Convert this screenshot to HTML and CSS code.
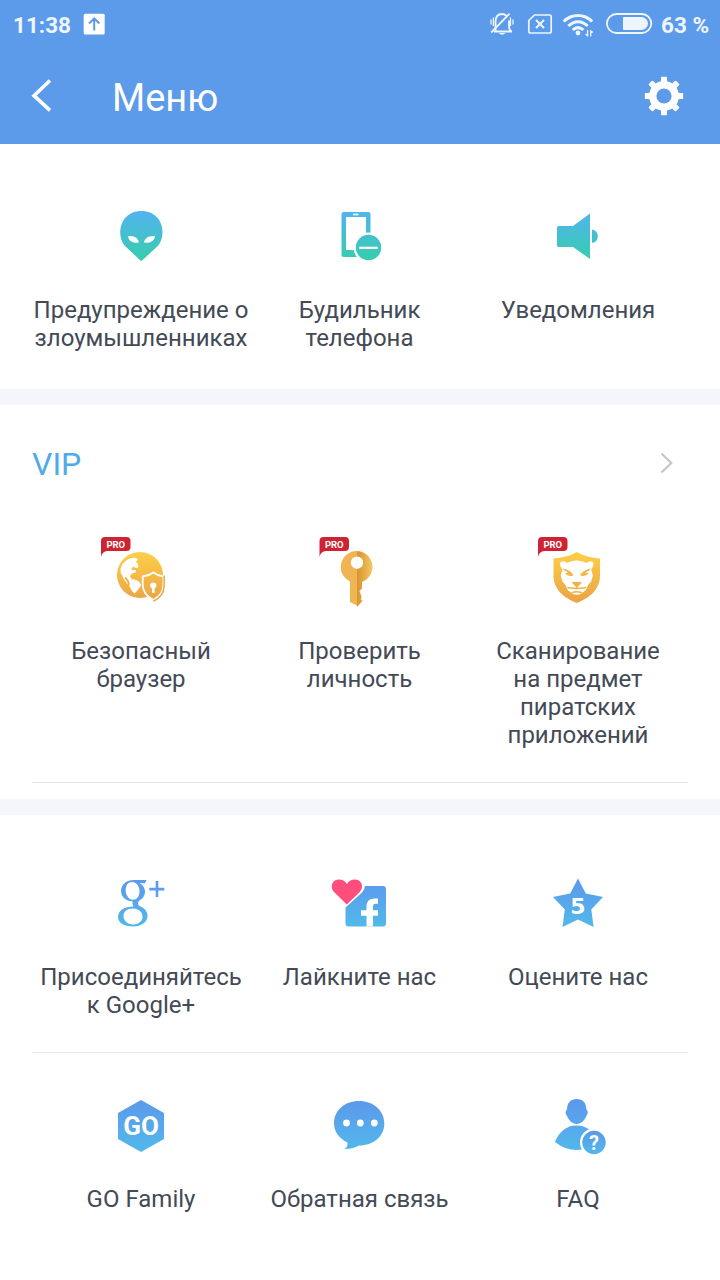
FILE: index.html
```html
<!DOCTYPE html>
<html lang="ru">
<head>
<meta charset="utf-8">
<title>Меню</title>
<link rel="stylesheet" href="styles.css">
</head>
<body>
<svg class="defs" width="0" height="0">
  <defs>
    <linearGradient id="teal" gradientUnits="userSpaceOnUse" x1="0" y1="211" x2="0" y2="261"><stop offset="0" stop-color="#52b3f0"/><stop offset="1" stop-color="#36ceab"/></linearGradient>
    <linearGradient id="gold" gradientUnits="userSpaceOnUse" x1="0" y1="552" x2="0" y2="602"><stop offset="0" stop-color="#fdcf48"/><stop offset="1" stop-color="#e9a344"/></linearGradient>
    <linearGradient id="blue" gradientUnits="userSpaceOnUse" x1="0" y1="879" x2="0" y2="927"><stop offset="0" stop-color="#5c98ec"/><stop offset="1" stop-color="#51b9ea"/></linearGradient>
    <linearGradient id="blue2" gradientUnits="userSpaceOnUse" x1="0" y1="1100" x2="0" y2="1152"><stop offset="0" stop-color="#5c98ec"/><stop offset="1" stop-color="#51b9ea"/></linearGradient>
    <linearGradient id="badge" gradientUnits="userSpaceOnUse" x1="0" y1="1131" x2="0" y2="1154"><stop offset="0" stop-color="#5c98ec"/><stop offset="1" stop-color="#51b9ea"/></linearGradient>
    <linearGradient id="keyr" gradientUnits="userSpaceOnUse" x1="357" y1="0" x2="373" y2="0"><stop offset="0" stop-color="#d99331"/><stop offset="1" stop-color="#f1cb62"/></linearGradient>
    <g id="pro"><path d="M101 557V541q0-4 4-4h21.500q4 0 4 4v6q0 4-4 4h-19q-5.500 .5-6.500 6z" fill="#ce2333"/><text x="115.800" y="547.900" class="pro">PRO</text></g>
  </defs>
</svg>
<header class="top">
  <div class="status">
    <span class="time">11:38</span>
    <svg class="upload" width="22" height="22" viewBox="83 13 22 22"><rect x="83.700" y="13.700" width="21" height="20.800" rx="1.500" fill="#fff"/><path d="M94.200 30.500V19M89 23.500l5.200-5 5.200 5" fill="none" stroke="#5c9aea" stroke-width="2"/></svg>
    <svg class="signals" width="166" height="28" viewBox="488 10 166 28" fill="none" stroke="#eef5fe">
      <path d="M494 31.500h18M495.500 31V22q0-8 6.500-8c2 0 3.500.7 4.600 2M509 20.500v6.500q0 2.500 2.500 4.500" stroke-width="1.900"/>
      <path d="M491.200 32.500 509.500 13.700" stroke-width="1.800"/>
      <path d="M493.400 17.500v8.500M491 19.500v5M510.500 17.500v8.500M513 19.500v5" stroke-width="1.300"/>
      <path d="M498.700 33h6.800q-3.400 3.500-6.800 0z" fill="#eef5fe" stroke="none"/>
      <path d="M534.500 15h15q1.700 0 1.700 1.700v14.600q0 1.700-1.700 1.700h-19q-1.700 0-1.700-1.700V20.500z" stroke-width="1.700"/>
      <path d="M536 20l8 8M544 20l-8 8" stroke-width="2"/>
      <path d="M563.700 21.500c8-8 20.500-8 28.500 0M568.300 26c6-5.700 13.500-5.700 19.400 0M572.700 30c3.400-3 7.300-3 10.700 0" stroke-width="3"/>
      <circle cx="578" cy="33" r="2.400" fill="#eef5fe" stroke="none"/>
      <path d="M587.600 30v6.500M585.500 34l2 2M590.700 36.500V30M592.800 32.500l-2-2" stroke-width="1.300"/>
      <rect x="606.900" y="14" width="44.400" height="19" rx="9.500" stroke-width="1.800"/>
      <path d="M624 17h17.500a6.500 6.500 0 0 1 0 13H624q-1 0-1-1V18q0-1 1-1z" fill="#eef5fe" stroke="none"/>
    </svg>
    <span class="battery">63 %</span>
  </div>
  <div class="appbar">
    <svg width="22" height="36" viewBox="30 78 22 36"><path d="M50 80.500 34 95.700 50 110.300" fill="none" stroke="#fff" stroke-width="3.600"/></svg>
    <h1>Меню</h1>
    <svg width="40" height="40" viewBox="-20 -20 40 40">
      <g fill="#fff">
        <rect x="-3" y="-19.200" width="6" height="38.400" rx="1"/>
        <rect x="-3" y="-19.200" width="6" height="38.400" rx="1" transform="rotate(45)"/>
        <rect x="-3" y="-19.200" width="6" height="38.400" rx="1" transform="rotate(90)"/>
        <rect x="-3" y="-19.200" width="6" height="38.400" rx="1" transform="rotate(135)"/>
        <circle r="15"/>
      </g>
      <circle r="7.600" fill="#5c9aea"/>
    </svg>
  </div>
</header>

<section class="panel first">
  <div class="row">
    <div class="item"><svg width="218" height="88" viewBox="32 192 218 88"><path d="M141.300 261.300 125 246c-3-3.500-4.800-8-4.800-13.500 0-13 9-21.500 21.200-21.500s21.100 8.500 21.100 21.500c0 5.500-1.800 10-4.800 13.500z" fill="url(#teal)"/><path d="M128 236.200c6-1 10 2 11.200 6.400-6 .8-10.500-1.400-11.200-6.400zM155 236.200c-6-1-10 2-11.200 6.400 6 .8 10.500-1.400 11.200-6.400z" fill="#fff"/></svg><p>Предупреждение о злоумышленниках</p></div>
    <div class="item"><svg width="219" height="88" viewBox="250 192 219 88"><path fill-rule="evenodd" d="M343.500 212h25q2 0 2 2v43h-27q-2 0-2-2v-41q0-2 2-2zM346 217v33h20v-33z" fill="url(#teal)"/><path d="M353 214.500h5.500" stroke="#fff" stroke-width="1.600"/><circle cx="368.500" cy="247.500" r="15" fill="#fff"/><circle cx="368.500" cy="247.500" r="12.700" fill="url(#teal)"/><path d="M359.300 247.800h18.400" stroke="#fff" stroke-width="2.200"/></svg><p>Будильник<br>телефона</p></div>
    <div class="item"><svg width="218" height="88" viewBox="469 192 218 88"><path d="M558.500 226H573l17-12.500V259l-17-12h-14.500q-1.500 0-1.500-1.500v-18q0-1.500 1.500-1.500zM592 229.500a6.900 6.900 0 0 1 0 13.600z" fill="url(#teal)"/></svg><p>Уведомления</p></div>
  </div>
</section>

<section class="panel vip">
  <div class="heading"><h2>VIP</h2><svg width="14" height="22" viewBox="660 452 14 22"><path d="M661.500 453.500 671.300 463 661.500 472.500" fill="none" stroke="#c4c6c9" stroke-width="2.200"/></svg></div>
  <div class="row">
    <div class="item"><svg width="218" height="88" viewBox="32 533 218 88">
      <circle cx="140" cy="575" r="23" fill="url(#gold)"/>
      <path d="M120.500 571c0-6 4-10 8.500-12 3-2 7-1.500 9 .5l-2 2.500c2 1 3 4 2 5.500-2 1.500-3-.5-5-1l-2 3.500h5l-.5 2.500c-3 .5-5 1.500-5.500 4l2 3c4-.5 9 2 9 6.500-2 2-4.500 6-6.500 7.500-3-2-4-6-6-8.500-3-3-5-6-6-9-1-1.500-2-3-2-5z" fill="#fff"/>
      <path d="M125 577.500q4 3.500 4 8" fill="none" stroke="#efb146" stroke-width="1.800"/>
      <path d="M153.300 572.500c3.300 2.500 6.500 3.500 10.200 4v8c0 7.500-4.700 12.500-10.200 15.500-5.600-3-10.600-8-10.600-15.500v-8c4-.5 7.300-1.500 10.600-4z" fill="url(#gold)" stroke="#fff" stroke-width="1.800"/>
      <path d="M164.200 575.500v10c0 7.500-5 13-10.900 15.700" fill="none" stroke="#eba746" stroke-width="1.500"/>
      <circle cx="153.300" cy="585.500" r="3.100" fill="#fff"/><path d="M152 587h2.600v6H152z" fill="#fff"/><use href="#pro"/></svg><p>Безопасный<br>браузер</p></div>
    <div class="item"><svg width="219" height="88" viewBox="250 533 219 88">
      <path d="M357 551a16 16 0 0 0-7 30.500v20.500l7 3.500z" fill="#f0b453"/>
      <path d="M357 551a16 16 0 0 1 5 31v6.500l-2.500 2.500 2 5.500-.5 3 1.500 1.500-5.500 6z" fill="url(#keyr)"/>
      <circle cx="357" cy="562.700" r="6.200" fill="#fff"/><use href="#pro" x="218.500"/></svg><p>Проверить<br>личность</p></div>
    <div class="item"><svg width="218" height="88" viewBox="469 533 218 88">
      <path d="M576.800 552c7 4 15 6 23.200 6.500v17c0 14-10.500 22.500-23.200 27.500-12.700-5-23.300-13.500-23.300-27.500v-17c8.300-.5 16.300-2.500 23.300-6.500z" fill="url(#gold)"/>
      <path d="M560.500 562q4-2 6.500 1c6-3.500 13.500-3.500 19.500 0q2.500-3 6.500-1c1.300 3-.5 6-1.800 7.500l1.700 6-1.800 6-3 3.500-2.200 5-5 4q-4 1.500-8.200 0l-5-4-2.200-5-3-3.500-1.800-6 1.700-6c-1.300-1.500-3.100-4.500-1.900-7.500z" fill="#fff"/>
      <path d="M562.500 568.500q7.500 1 11 6.500l-1.500 1q-5 .5-7-3 2 0 3-.5-3-1-5.500-4zM591.100 568.500q-7.500 1-11 6.500l1.500 1q5 .5 7-3-2 0-3-.5 3-1 5.500-4z" fill="#f3b847"/>
      <path d="M571.500 582h10.600l-3.800 4.500h-3z" fill="#f0b146"/>
      <path d="M576.800 586v2.500M567.500 587.500q5 1 9.300 1 4.300 0 9.300-1M571.500 593q5.300-2.500 10.600 0" fill="none" stroke="#f0b146" stroke-width="1.500"/><use href="#pro" x="437"/></svg><p>Сканирование<br>на предмет<br>пиратских<br>приложений</p></div>
  </div>
  <hr>
</section>

<section class="panel social">
  <div class="row">
    <div class="item"><svg width="218" height="88" viewBox="32 859 218 88">
      <g fill="url(#blue)" fill-rule="evenodd">
        <path d="M134 880h12.500l-1.500 3.300h-5.500c3.500 2 5.500 4.500 5.500 8.500 0 5.500-4.500 9.700-10 9.700h-1.500c-6.500 0-12.500-4-12.500-10.500S126.500 880 134 880zM132 882c-4 0-6.300 3.500-6.300 8.200s3 9.500 7 9.500 6.800-3.500 6.800-8.500-3-9.200-7.500-9.200z"/>
        <path d="M133 900h6.500q-3 4 0 6 8 3 8 10c0 6-6 10.500-14.800 10.500-8.500 0-14.700-3.800-14.700-9.500 0-6.500 6.500-10.500 15.500-10.500-1-2-1.500-4-.5-6.500zM133 908.500c-6 0-9.500 3-9.500 7.500s4 8.500 9.700 8.500c6 0 9.300-3.700 9.300-8s-3.500-8-9.500-8z"/>
        <path d="M155.700 881h2.600v6.700h6v2.700h-6v6.600h-2.600v-6.600h-6.400v-2.700h6.400z"/>
      </g></svg><p>Присоединяйтесь к Google+</p></div>
    <div class="item"><svg width="219" height="88" viewBox="250 859 219 88">
      <rect x="345.500" y="886" width="40.500" height="40.500" rx="3" fill="url(#blue)"/>
      <path d="M345 876h20v9.500q0 4-3 7L345 908z" fill="#fff"/>
      <path d="M346.800 904.500 334 892c-5-6-1-12.500 5-12.500 3.500 0 6.500 1.800 7.800 4.500 1.500-2.700 4.500-4.500 8-4.500 6 0 10 6.500 5 12.500z" fill="#ff4d7e"/>
      <path d="M366.500 926.500v-10.700H361v-5.500h5.500v-3.500c0-5.500 3-8.300 8-8.300h3.500v5.200h-2c-2.500 0-3 1.200-3 3.200v3.400h5v5.500h-5v10.700z" fill="#fff"/></svg><p>Лайкните нас</p></div>
    <div class="item"><svg width="218" height="88" viewBox="469 859 218 88"><path d="M578 878.500 585.800 893.500 603 897 591.300 909.500 593.600 927 578 919.500 562.500 927 564.800 909.500 553 897 570.200 893.500z" fill="url(#blue)"/><text x="578" y="913.500" class="five">5</text></svg><p>Оцените нас</p></div>
  </div>
  <hr>
  <div class="row second">
    <div class="item"><svg width="218" height="88" viewBox="32 1081 218 88"><path d="M141 1100 164 1113v26l-23 13-23-13v-26z" fill="url(#blue2)"/><text x="141" y="1134.500" class="go">GO</text></svg><p>GO Family</p></div>
    <div class="item"><svg width="219" height="88" viewBox="250 1081 219 88"><path d="M359 1101c14.500 0 25.300 9.500 25.300 22.500s-11 22-25.300 22q-6 3.500-14.300 3.500 3.300-2.500 2.800-6.500c-8-4-13.500-10.500-13.500-19 0-13 10.500-22.500 25-22.500z" fill="url(#blue2)"/><g fill="#fff"><circle cx="346.500" cy="1123" r="3.400"/><circle cx="360.300" cy="1123" r="3.400"/><circle cx="374.300" cy="1123" r="3.400"/></g></svg><p>Обратная связь</p></div>
    <div class="item"><svg width="218" height="88" viewBox="469 1081 218 88"><path d="M576.700 1099c6 0 9.500 3.500 9.700 10.500 2 1.500 1.500 5 0 6.500-2 5-6 8-9.700 8s-7.700-3-9.700-8c-1.500-1.500-2-5 0-6.500.2-7 3.700-10.500 9.700-10.500zM555 1142c4-10.500 12-16.500 21.500-16.500 10 0 18 6 21.500 16.500q-10 8-21.500 8T555 1142z" fill="url(#blue2)"/><circle cx="594" cy="1142.500" r="14" fill="#fff"/><circle cx="594" cy="1142.500" r="11.700" fill="url(#badge)"/><text x="594" y="1149.700" class="question">?</text></svg><p>FAQ</p></div>
  </div>
</section>
</body>
</html>
```
FILE: styles.css
```css
* { box-sizing: border-box; }
body {
  margin: 0;
  width: 720px;
  height: 1280px;
  overflow: hidden;
  background: #f5f6fb;
  color: #434a56;
  font-family: Roboto, "Noto Sans", sans-serif;
  display: flex;
  flex-direction: column;
}
svg { display: block; flex: none; }
.defs { position: absolute; }
.top { height: 144px; background: #5c9aea; color: #fff; }
.status {
  height: 48px;
  padding: 0 12px;
  display: flex;
  align-items: center;
  color: #eef5fe;
  font-size: 22.5px;
  font-weight: 700;
}
.time { width: 71px; padding: 1px 0 0 1px; white-space: nowrap; }
.signals { margin-left: auto; }
.battery { width: 47px; margin-left: 7px; padding-top: 1px; white-space: nowrap; }
.appbar {
  height: 96px;
  padding: 0 36px 0 30px;
  display: flex;
  align-items: center;
}
h1 {
  margin: 4px auto 0 60px;
  font-size: 38px;
  line-height: 44px;
  font-weight: 400;
}
.panel { background: #fff; }
.panel + .panel { margin-top: 16px; }
.first { height: 245px; padding-top: 48px; }
.vip { height: 394px; }
.social { flex: 1; padding-top: 44px; }
.row {
  margin-left: 32px;
  display: grid;
  grid-template-columns: 218px 219px 218px;
}
.item p {
  margin: 16px 0 0;
  text-align: center;
  font-size: 24px;
  line-height: 28px;
}
.heading {
  height: 128px;
  padding: 0 46px 12px 32px;
  display: flex;
  align-items: center;
  justify-content: space-between;
}
h2 {
  margin: 1px 0 0;
  color: #4eabe9;
  font-size: 32px;
  font-weight: 400;
}
hr { margin: 33px 32px 0; border: 0; height: 1px; background: #e6e7e9; }
.second { margin-top: 28px; }
text { text-anchor: middle; fill: #fff; font-weight: 700; }
.pro { font-size: 9.5px; }
.five { font-family: "DejaVu Sans", sans-serif; font-size: 22px; }
.go { font-size: 26px; }
.question { font-size: 20px; }
```
